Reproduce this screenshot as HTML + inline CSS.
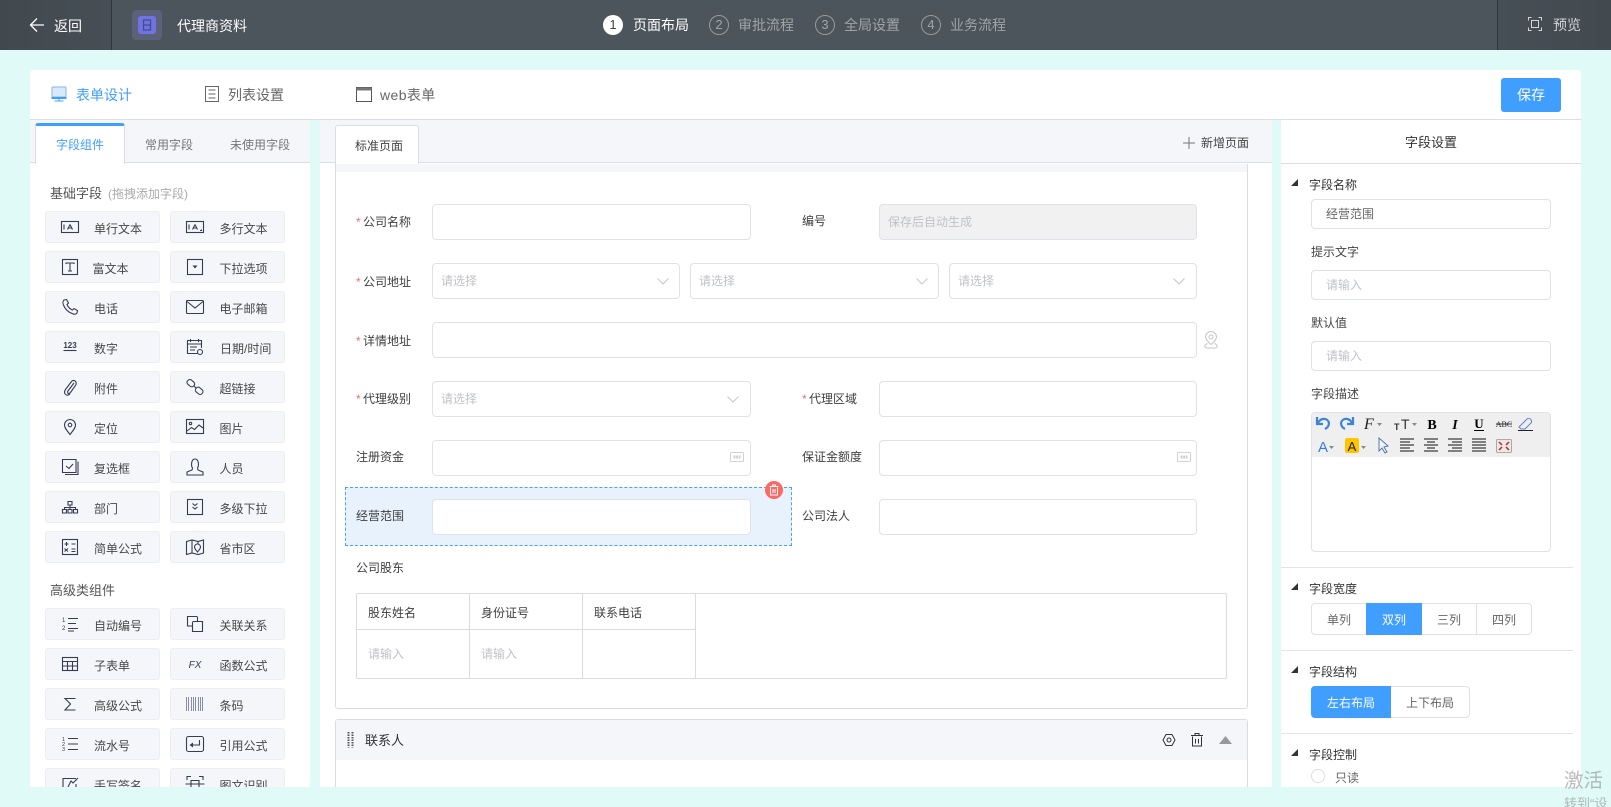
<!DOCTYPE html>
<html lang="zh"><head><meta charset="utf-8"><title>代理商资料</title>
<style>
html,body{margin:0;padding:0;width:1611px;height:807px;overflow:hidden;background:#e0fbf7;font-family:"Liberation Sans","Noto Sans CJK SC",sans-serif;font-size:12px;color:#555}
div,span,svg{position:absolute;box-sizing:border-box}
.t{white-space:nowrap;line-height:20px;height:20px}
.i{border:1px solid #e0e2ea;border-radius:4px;background:#fff;height:36px}
.ph{color:#c0c2c8}
.b{width:115px;height:32px;background:#f4f6fa;border:1px solid #ebeef4;border-radius:3px}
.b .t{left:48px;top:7px;color:#484848}
.b svg{left:14px;top:5px}
.st{fill:none;stroke:#363c52;stroke-width:1.1}
.s14{font-size:14px}
.lb{color:#3f3f3f}
.star{position:static;display:inline-block;width:7px;color:#f56c6c}
.ln{background:#e2e4ea;height:1px}
</style></head><body>
<!-- header -->
<div style="left:0;top:0;width:1611px;height:50px;background:#4d555c"></div>
<div style="left:0;top:0;width:112px;height:50px;background:linear-gradient(90deg,#41494f,#474f56);border-right:1px solid #2f353a"></div>
<div style="left:1497px;top:0;width:114px;height:50px;background:linear-gradient(90deg,#474f56,#42494f);border-left:1px solid #2f353a"></div>
<svg style="left:29px;top:17px" width="16" height="16" viewBox="0 0 16 16"><path d="M15 8H1.500M8 1.500L1.500 8L8 14.500" fill="none" stroke="#fff" stroke-width="1.300"/></svg>
<div class="t s14" style="left:54px;top:16px;color:#fff">返回</div>
<div style="left:132px;top:10px;width:30px;height:30px;border-radius:4px;background:#5b6179"></div>
<div style="left:138px;top:16px;width:18px;height:18px;border-radius:3px;background:#6f74e2"></div>
<svg style="left:142px;top:18px" width="10" height="14" viewBox="0 0 10 14"><path d="M1.500 2h7v10h-7zM1.500 7h7" fill="none" stroke="#474a8c" stroke-width="1.300"/></svg>
<div class="t" style="left:177px;top:16px;font-size:14px;color:#fff">代理商资料</div>

<div style="left:603px;top:15px;width:20px;height:20px;border-radius:50%;background:#fff;color:#444;text-align:center;line-height:20px;font-size:13px">1</div>
<div class="t s14" style="left:633px;top:15px;color:#fff">页面布局</div>
<div style="left:709px;top:15px;width:20px;height:20px;border-radius:50%;border:1px solid #999;color:#a0a4a7;text-align:center;line-height:18px;font-size:13px">2</div>
<div class="t s14" style="left:738px;top:15px;color:#a0a4a7">审批流程</div>
<div style="left:815px;top:15px;width:20px;height:20px;border-radius:50%;border:1px solid #999;color:#a0a4a7;text-align:center;line-height:18px;font-size:13px">3</div>
<div class="t s14" style="left:844px;top:15px;color:#a0a4a7">全局设置</div>
<div style="left:921px;top:15px;width:20px;height:20px;border-radius:50%;border:1px solid #999;color:#a0a4a7;text-align:center;line-height:18px;font-size:13px">4</div>
<div class="t s14" style="left:950px;top:15px;color:#a0a4a7">业务流程</div>
<svg style="left:1527px;top:16px" width="16" height="16" viewBox="0 0 16 16"><path d="M4.500 1.500H1.500V4.500M11.500 1.500H14.500V4.500M4.500 14.500H1.500V11.500M11.500 14.500H14.500V11.500M4.500 4.500H11.500V11.500H4.500Z" fill="none" stroke="#d2d4d6" stroke-width="1"/></svg>
<div class="t s14" style="left:1553px;top:15px;color:#d2d4d6">预览</div>

<!-- card -->
<div style="left:30px;top:70px;width:1551px;height:717px;background:#fff;border-radius:4px 4px 0 0"></div>
<div style="left:30px;top:119px;width:1551px;height:1px;background:#dcdde2"></div>
<svg style="left:51px;top:86px" width="16" height="16" viewBox="0 0 16 16"><rect x="1" y="1" width="14" height="10" rx="1" fill="#dbe9fd" stroke="#7fb5fb"/><path d="M1 11.500h14v1H1zM8 12v3M3.500 15h9" stroke="#409eff" fill="#409eff"/></svg>
<div class="t s14" style="left:76px;top:85px;color:#409eff">表单设计</div>
<svg style="left:204px;top:86px" width="16" height="16" viewBox="0 0 16 16"><path d="M1.500 .5h13v15h-13zM4.500 4h7M4.500 8h7M4.500 12h7" fill="none" stroke="#666"/></svg>
<div class="t s14" style="left:228px;top:85px;color:#666">列表设置</div>
<svg style="left:356px;top:87px" width="16" height="15" viewBox="0 0 16 15"><rect x=".5" y=".5" width="15" height="14" fill="none" stroke="#555"/><rect x=".5" y=".5" width="15" height="3" fill="#777"/></svg>
<div class="t s14" style="left:380px;top:85px;color:#666;letter-spacing:.4px">web表单</div>
<div style="left:1501px;top:78px;width:60px;height:34px;background:#409eff;border-radius:3px;color:#fff;text-align:center;line-height:34px;font-size:14px">保存</div>

<!-- gaps -->
<div style="left:310px;top:120px;width:10px;height:667px;background:#e0fbf7"></div>
<div style="left:1272px;top:120px;width:9px;height:667px;background:#e0fbf7"></div>

<!-- left panel -->
<div style="left:30px;top:120px;width:280px;height:43px;background:#f4f6fa;border-bottom:1px solid #dcdde2"></div>
<div style="left:35px;top:123px;width:90px;height:41px;background:#fff;border:1px solid #dcdde2;border-top:3px solid #409eff;border-bottom:0;border-radius:3px 3px 0 0"></div>
<div class="t" style="left:56px;top:135px;color:#409eff">字段组件</div>
<div class="t" style="left:145px;top:135px;color:#777">常用字段</div>
<div class="t" style="left:230px;top:135px;color:#777">未使用字段</div>
<div class="t" style="left:50px;top:184px;font-size:13px;color:#555">基础字段<span style="position:static;font-size:12px;color:#aaa;margin-left:6px">(拖拽添加字段)</span></div>

<div style="left:30px;top:200px;width:280px;height:587px;overflow:hidden">
<div class="b" style="left:15px;top:11px"><svg width="20" height="20" viewBox="0 0 20 20"><rect class="st" x="1.500" y="4.500" width="17" height="11"/><path class="st" d="M4 7.500v5M10 7.500l-2.500 5M10 7.500l2.500 5M8.500 11h3"/></svg><div class="t">单行文本</div></div>
<div class="b" style="left:140px;top:11px"><svg width="20" height="20" viewBox="0 0 20 20"><rect class="st" x="1.500" y="4.500" width="17" height="11"/><path class="st" d="M4 7.500v5M10 7.500l-2.500 5M10 7.500l2.500 5M8.500 11h3M15 13.500h1.500v-1"/></svg><div class="t" style="left:48.500px">多行文本</div></div>
<div class="b" style="left:15px;top:51px"><svg width="20" height="20" viewBox="0 0 20 20"><rect class="st" x="2.500" y="2.500" width="15" height="15"/><path class="st" d="M6 7V6h8v1M10 6v8M8 14h4"/></svg><div class="t" style="left:46.500px">富文本</div></div>
<div class="b" style="left:140px;top:51px"><svg width="20" height="20" viewBox="0 0 20 20"><rect class="st" x="2.500" y="2.500" width="15" height="15"/><path d="M7.500 8.500h5L10 11.500z" fill="#363c52"/></svg><div class="t" style="left:48.500px">下拉选项</div></div>
<div class="b" style="left:15px;top:91px"><svg width="20" height="20" viewBox="0 0 20 20"><path class="st" d="M4 3L6.500 2.500L8.500 6L7 7.500C8 10 10 12 12.500 13L14 11.500L17.500 13.500L17 16C16 17.500 14 17.500 12 16.500C8 15 5 12 3.500 8C2.500 6 3 4 4 3Z"/></svg><div class="t">电话</div></div>
<div class="b" style="left:140px;top:91px"><svg width="20" height="20" viewBox="0 0 20 20"><rect class="st" x="1.500" y="3.500" width="17" height="13" rx="1"/><path class="st" d="M2 4.500L10 11L18 4.500"/></svg><div class="t" style="left:48.500px">电子邮箱</div></div>
<div class="b" style="left:15px;top:131px"><svg width="20" height="20" viewBox="0 0 20 20"><text x="10" y="11" font-size="8" font-weight="bold" text-anchor="middle" fill="#363c52" font-family="Liberation Sans">123</text><path class="st" d="M3.500 13.500h13"/></svg><div class="t">数字</div></div>
<div class="b" style="left:140px;top:131px"><svg width="20" height="20" viewBox="0 0 20 20"><path class="st" d="M12.500 16.500H2.500V3.500H16.500V11M5.500 2V5M13.500 2V5M2.500 7H16.500M5 10H12M5 13H10"/><circle class="st" cx="15" cy="15" r="2.500"/></svg><div class="t" style="left:49px">日期/时间</div></div>
<div class="b" style="left:15px;top:171px"><svg width="20" height="20" viewBox="0 0 20 20"><path class="st" d="M14 6L8 14C6.500 16 9 17.500 10.500 15.500L15.500 8.500C17.500 5.500 14.500 1.500 11.500 4.500L5.500 12.500C3 16 6 20 10 17"/></svg><div class="t">附件</div></div>
<div class="b" style="left:140px;top:171px"><svg width="20" height="20" viewBox="0 0 20 20"><rect class="st" x="2" y="3.500" width="8" height="5.500" rx="2.500" transform="rotate(40 6 6)"/><rect class="st" x="10" y="11" width="8" height="5.500" rx="2.500" transform="rotate(40 14 14)"/><path class="st" d="M8.500 8.500L11.500 11.500"/></svg><div class="t" style="left:48.500px">超链接</div></div>
<div class="b" style="left:15px;top:211px"><svg width="20" height="20" viewBox="0 0 20 20"><path class="st" d="M10 17.500C7 13.500 4.500 11 4.500 8A5.500 5.500 0 0 1 15.500 8C15.500 11 13 13.500 10 17.500Z"/><circle class="st" cx="10" cy="8" r="1.800"/></svg><div class="t">定位</div></div>
<div class="b" style="left:140px;top:211px"><svg width="20" height="20" viewBox="0 0 20 20"><rect class="st" x="1.500" y="2.500" width="17" height="14"/><circle class="st" cx="5.500" cy="6.500" r="1.200"/><path class="st" d="M2 14L6.500 10.500L9.500 12.500L14 8L18 11"/></svg><div class="t" style="left:48.500px">图片</div></div>
<div class="b" style="left:15px;top:251px"><svg width="20" height="20" viewBox="0 0 20 20"><path class="st" d="M16 2.500H2.500V15.500H16ZM18 4.500V17.500H5"/><path class="st" d="M6 9L9 11.500L13 7"/></svg><div class="t">复选框</div></div>
<div class="b" style="left:140px;top:251px"><svg width="20" height="20" viewBox="0 0 20 20"><path class="st" d="M7.500 11C6 9 6 2 10 2C14 2 14 9 12.500 11L13 13L18 15V18H2V15L7 13Z"/></svg><div class="t" style="left:48.500px">人员</div></div>
<div class="b" style="left:15px;top:291px"><svg width="20" height="20" viewBox="0 0 20 20"><path class="st" d="M8 4.500h4v3.500H8zM2.500 12.500h4V16h-4zM8 12.500h4V16H8zM13.500 12.500h4V16h-4zM10 8v4.500M4.500 12.500V10.500h11v2"/></svg><div class="t">部门</div></div>
<div class="b" style="left:140px;top:291px"><svg width="20" height="20" viewBox="0 0 20 20"><rect class="st" x="2.500" y="2.500" width="15" height="15"/><path class="st" d="M7.500 6.500L10 8.500L12.500 6.500M7.500 10L10 12L12.500 10"/></svg><div class="t" style="left:48.500px">多级下拉</div></div>
<div class="b" style="left:15px;top:331px"><svg width="20" height="20" viewBox="0 0 20 20"><rect class="st" x="2.500" y="2.500" width="15" height="15"/><path class="st" d="M4.500 7h4M6.500 5v4M11.500 7h4M4.500 11.500l3.500 3M8 11.500l-3.500 3M11.500 12h4M11.500 14.500h4"/></svg><div class="t">简单公式</div></div>
<div class="b" style="left:140px;top:331px"><svg width="20" height="20" viewBox="0 0 20 20"><path class="st" d="M1.500 4.500L7 3L13 4.500L18.500 3V16L13 17.500L7 16L1.500 17.500ZM7 3V16M13 4.500V7"/><path class="st" d="M12.500 15C10.500 12.500 9.500 11.500 9.500 10A3 3 0 0 1 15.500 10C15.500 11.500 14.500 12.500 12.500 15Z"/></svg><div class="t" style="left:48.500px">省市区</div></div>

<div class="t" style="left:20px;top:381px;font-size:13px;color:#555">高级类组件</div>

<div class="b" style="left:15px;top:408px"><svg width="20" height="20" viewBox="0 0 20 20"><path class="st" d="M8 4.500h10M8 9.500h8M8 14.500h10M8 17h6"/><text x="2" y="8" font-size="6" fill="#363c52" font-family="Liberation Sans">1</text><text x="2" y="16" font-size="6" fill="#363c52" font-family="Liberation Sans">2</text></svg><div class="t">自动编号</div></div>
<div class="b" style="left:140px;top:408px"><svg width="20" height="20" viewBox="0 0 20 20"><path class="st" d="M12 2.500H2.500V12H7M8 7.500H17.500V17.500H7.500V7.500M12.500 2.500V7.500"/></svg><div class="t" style="left:48.500px">关联关系</div></div>
<div class="b" style="left:15px;top:448px"><svg width="20" height="20" viewBox="0 0 20 20"><rect class="st" x="2.500" y="3.500" width="15" height="13"/><path class="st" d="M2.500 7.500h15M2.500 12h15M7.500 7.500v9M12.500 7.500v9"/></svg><div class="t">子表单</div></div>
<div class="b" style="left:140px;top:448px"><svg width="20" height="20" viewBox="0 0 20 20"><text x="10" y="14" font-size="10" font-style="italic" text-anchor="middle" fill="#363c52" font-family="Liberation Sans">FX</text></svg><div class="t" style="left:48.500px">函数公式</div></div>
<div class="b" style="left:15px;top:488px"><svg width="20" height="20" viewBox="0 0 20 20"><path class="st" stroke-width="1.200" d="M15.500 4.500H5L10.500 10L5 16H15.500"/></svg><div class="t">高级公式</div></div>
<div class="b" style="left:140px;top:488px"><svg width="20" height="20" viewBox="0 0 20 20"><path stroke="#8a8ca8" stroke-width="1" d="M1.500 3v14M3.500 3v14M6.500 3v14M8.500 3v14M10.500 3v14M13.500 3v14M15.500 3v14M17.500 3v14"/></svg><div class="t" style="left:48.500px">条码</div></div>
<div class="b" style="left:15px;top:528px"><svg width="20" height="20" viewBox="0 0 20 20"><path class="st" d="M8 4.500h10M8 10h10M8 15.500h10"/><text x="2" y="7" font-size="5.500" fill="#363c52" font-family="Liberation Sans">1</text><text x="2" y="12" font-size="5.500" fill="#363c52" font-family="Liberation Sans">2</text><text x="2" y="17" font-size="5.500" fill="#363c52" font-family="Liberation Sans">3</text></svg><div class="t">流水号</div></div>
<div class="b" style="left:140px;top:528px"><svg width="20" height="20" viewBox="0 0 20 20"><rect class="st" x="1.500" y="2.500" width="17" height="15" rx="2"/><path class="st" d="M14.500 6v5H6.500"/><path d="M8 8.500V13.500L4.500 11z" fill="#363c52"/></svg><div class="t" style="left:48.500px">引用公式</div></div>
<div class="b" style="left:15px;top:568px"><svg width="20" height="20" viewBox="0 0 20 20"><path class="st" d="M16 4.500H3V17H16V10M8 13L11 7L13 9L18 4"/></svg><div class="t">手写签名</div></div>
<div class="b" style="left:140px;top:568px"><svg width="20" height="20" viewBox="0 0 20 20"><path class="st" d="M2 6V2.500H6M14 2.500H18V6M2 14V17.500H6M14 17.500H18V14M.5 10h19M6 6.500H14V14H6z"/></svg><div class="t" style="left:48.500px">图文识别</div></div>
</div>

<!-- center -->
<div style="left:320px;top:120px;width:952px;height:43px;background:#f4f6fa;border-bottom:1px solid #dcdde2"></div>
<div style="left:335px;top:164px;width:913px;height:545px;border:1px solid #dcdcdf;border-top:0;border-radius:0 0 3px 3px"></div>
<div style="left:336px;top:164px;width:911px;height:8px;background:#f4f6fa"></div>
<div style="left:335px;top:125px;width:84px;height:39px;background:#fff;border:1px solid #dcdde2;border-bottom:0;border-radius:3px 3px 0 0"></div>
<div class="t" style="left:355px;top:136px;color:#444">标准页面</div>
<svg style="left:1183px;top:137px" width="12" height="12" viewBox="0 0 12 12"><path d="M6 0V12M0 6H12" stroke="#777" fill="none"/></svg>
<div class="t" style="left:1201px;top:133px;color:#444">新增页面</div>

<div class="t lb" style="left:356px;top:212px"><span class="star">*</span>公司名称</div>
<div class="i" style="left:432px;top:204px;width:319px"></div>
<div class="t lb" style="left:802px;top:211px">编号</div>
<div class="i" style="left:879px;top:204px;width:318px;background:#f1f1f1"></div>
<div class="t ph" style="left:888px;top:212px">保存后自动生成</div>

<div class="t lb" style="left:356px;top:272px"><span class="star">*</span>公司地址</div>
<div class="i" style="left:432px;top:263px;width:248px"></div>
<div class="t ph" style="left:441px;top:271px">请选择</div>
<svg style="left:657px;top:278px" width="12" height="7" viewBox="0 0 12 7"><path d="M.5 .5L6 6L11.500 .5" fill="none" stroke="#c4c6cc"/></svg>
<div class="i" style="left:690px;top:263px;width:249px"></div>
<div class="t ph" style="left:699px;top:271px">请选择</div>
<svg style="left:916px;top:278px" width="12" height="7" viewBox="0 0 12 7"><path d="M.5 .5L6 6L11.500 .5" fill="none" stroke="#c4c6cc"/></svg>
<div class="i" style="left:949px;top:263px;width:248px"></div>
<div class="t ph" style="left:958px;top:271px">请选择</div>
<svg style="left:1173px;top:278px" width="12" height="7" viewBox="0 0 12 7"><path d="M.5 .5L6 6L11.500 .5" fill="none" stroke="#c4c6cc"/></svg>

<div class="t lb" style="left:356px;top:331px"><span class="star">*</span>详情地址</div>
<div class="i" style="left:432px;top:322px;width:765px"></div>
<svg style="left:1203px;top:331px" width="16" height="18" viewBox="0 0 16 18"><path d="M8 13.500C5 10.500 2.500 8.500 2.500 6A5.500 5.500 0 0 1 13.500 6C13.500 8.500 11 10.500 8 13.500Z" fill="none" stroke="#c4c6cc"/><circle cx="8" cy="6" r="2" fill="none" stroke="#c4c6cc"/><path d="M4.500 12.500C1 14 1 17 4 17H12C15 17 15 14 11.500 12.500" fill="none" stroke="#c4c6cc"/></svg>

<div class="t lb" style="left:356px;top:389px"><span class="star">*</span>代理级别</div>
<div class="i" style="left:432px;top:381px;width:319px"></div>
<div class="t ph" style="left:441px;top:389px">请选择</div>
<svg style="left:727px;top:396px" width="12" height="7" viewBox="0 0 12 7"><path d="M.5 .5L6 6L11.500 .5" fill="none" stroke="#c4c6cc"/></svg>
<div class="t lb" style="left:802px;top:389px"><span class="star">*</span>代理区域</div>
<div class="i" style="left:879px;top:381px;width:318px"></div>

<div class="t lb" style="left:356px;top:447px">注册资金</div>
<div class="i" style="left:432px;top:440px;width:319px"></div>
<svg style="left:730px;top:452px" width="14" height="10" viewBox="0 0 14 10"><rect x=".5" y=".5" width="13" height="9" rx="1" fill="none" stroke="#d0d2d8"/><path d="M3.500 5h7" stroke="#d0d2d8" stroke-width="3" stroke-dasharray="2 .6"/></svg>
<div class="t lb" style="left:802px;top:447px">保证金额度</div>
<div class="i" style="left:879px;top:440px;width:318px"></div>
<svg style="left:1177px;top:452px" width="14" height="10" viewBox="0 0 14 10"><rect x=".5" y=".5" width="13" height="9" rx="1" fill="none" stroke="#d0d2d8"/><path d="M3.500 5h7" stroke="#d0d2d8" stroke-width="3" stroke-dasharray="2 .6"/></svg>

<div style="left:345px;top:487px;width:447px;height:59px;background:#e8f2fd;border:1px dashed #4aa6e0"></div>
<div class="t lb" style="left:356px;top:506px">经营范围</div>
<div class="i" style="left:432px;top:499px;width:319px"></div>
<div style="left:765px;top:481px;width:18px;height:18px;border-radius:50%;background:#f96a64"></div>
<svg style="left:768px;top:484px" width="12" height="12" viewBox="0 0 12 12"><path d="M2.500 3.500V11H9.500V3.500M1.500 2.500H10.500M4.500 2.500V1H7.500V2.500M5 5V9M7 5V9" fill="none" stroke="#fff"/></svg>
<div class="t lb" style="left:802px;top:506px">公司法人</div>
<div class="i" style="left:879px;top:499px;width:318px"></div>

<div class="t lb" style="left:356px;top:558px">公司股东</div>
<div style="left:356px;top:593px;width:871px;height:86px;border:1px solid #dcdcdc;border-radius:2px"></div>
<div style="left:469px;top:593px;width:1px;height:86px;background:#dcdcdc"></div>
<div style="left:582px;top:593px;width:1px;height:86px;background:#dcdcdc"></div>
<div style="left:695px;top:593px;width:1px;height:86px;background:#dcdcdc"></div>
<div style="left:357px;top:629px;width:338px;height:1px;background:#dcdcdc"></div>
<div class="t lb" style="left:368px;top:603px">股东姓名</div>
<div class="t lb" style="left:481px;top:603px">身份证号</div>
<div class="t lb" style="left:594px;top:603px">联系电话</div>
<div class="t ph" style="left:368px;top:644px">请输入</div>
<div class="t ph" style="left:481px;top:644px">请输入</div>

<div style="left:335px;top:719px;width:913px;height:68px;border:1px solid #dcdcdf;border-bottom:0;border-radius:3px 3px 0 0"></div>
<div style="left:336px;top:720px;width:911px;height:40px;background:#f4f6fa"></div>
<svg style="left:347px;top:732px" width="7" height="16" viewBox="0 0 7 16"><path d="M1.500 0V15.500M5.500 0V15.500" stroke="#555" stroke-width="2" stroke-dasharray="1.500 1" fill="none"/></svg>
<div class="t" style="left:365px;top:731px;font-size:13px;color:#333">联系人</div>
<svg style="left:1162px;top:733px" width="14" height="14" viewBox="0 0 14 14"><path d="M4 1.500H10L13 7L10 12.500H4L1 7Z" fill="none" stroke="#333" stroke-linejoin="round"/><circle cx="7" cy="7" r="2" fill="none" stroke="#333"/></svg>
<svg style="left:1191px;top:733px" width="12" height="14" viewBox="0 0 12 14"><path d="M1.500 3.500V13H10.500V3.500M0 2.500H12M4 2.500V.5H8V2.500M4.500 6V10.500M7.500 6V10.500" fill="none" stroke="#333"/></svg>
<svg style="left:1219px;top:736px" width="13" height="8" viewBox="0 0 13 8"><path d="M0 8L6.500 0L13 8Z" fill="#999"/></svg>

<!-- right panel -->
<div class="t" style="left:1405px;top:133px;font-size:13px;color:#333">字段设置</div>
<div style="left:1281px;top:163px;width:300px;height:1px;background:#dcdde2"></div>

<svg style="left:1291px;top:179px" width="7" height="7" viewBox="0 0 7 7"><path d="M7 0V7H0Z" fill="#333"/></svg>
<div class="t" style="left:1309px;top:175px;color:#333">字段名称</div>
<div class="i" style="left:1311px;top:199px;width:240px;height:30px"></div>
<div class="t" style="left:1326px;top:204px;color:#666">经营范围</div>
<div class="t" style="left:1311px;top:241.500px;color:#444">提示文字</div>
<div class="i" style="left:1311px;top:270px;width:240px;height:30px"></div>
<div class="t ph" style="left:1326px;top:275px">请输入</div>
<div class="t" style="left:1311px;top:312.500px;color:#444">默认值</div>
<div class="i" style="left:1311px;top:341px;width:240px;height:30px"></div>
<div class="t ph" style="left:1326px;top:346px">请输入</div>
<div class="t" style="left:1311px;top:383.500px;color:#444">字段描述</div>

<div style="left:1311px;top:412px;width:240px;height:140px;border:1px solid #dfe1e8;border-radius:4px;background:#fff;overflow:hidden"><div style="left:0;top:0;width:238px;height:44px;background:#efefef"></div></div>
<svg style="left:1311px;top:412px" width="240" height="46" viewBox="0 0 240 46" font-family="Liberation Serif">
<path d="M6 5V12H12M7 11C10 5 17 6 18 11C18 14 16 16 14 17" fill="none" stroke="#3f83d9" stroke-width="2.200"/>
<path d="M42 5V12H36M41 11C38 5 31 6 30 11C30 14 32 16 34 17" fill="none" stroke="#3f83d9" stroke-width="2.200"/>
<text x="53" y="17" font-size="16" font-style="italic" fill="#222">F</text><path d="M66 11h5l-2.500 3z" fill="#888"/>
<text x="83" y="18" font-size="9" font-family="Liberation Sans" font-weight="bold" fill="#333">T</text><text x="90" y="17" font-size="14" font-family="Liberation Sans" fill="#333">T</text><path d="M101 11h5l-2.500 3z" fill="#888"/>
<text x="121" y="17" font-size="14" font-weight="bold" text-anchor="middle" fill="#000">B</text>
<text x="144" y="17" font-size="14" font-weight="bold" font-style="italic" text-anchor="middle" fill="#000">I</text>
<text x="168" y="16" font-size="13" font-weight="bold" text-anchor="middle" fill="#000">U</text><path d="M163 18.500h10" stroke="#000"/>
<text x="193" y="15" font-size="8" text-anchor="middle" fill="#222">ABC</text><path d="M185 12h16" stroke="#334"/>
<path d="M208 15L216 7C218 5 222 8 220 11L214 17H210Z" fill="#e8eef8" stroke="#6a83b5"/><path d="M207 18.500H222" stroke="#222"/>
<text x="12" y="40" font-size="15" font-family="Liberation Sans" text-anchor="middle" fill="#3a7bea">A</text><path d="M18 34h5l-2.500 3z" fill="#888"/>
<rect x="34" y="26" width="14" height="15" rx="2" fill="#ffc400"/><text x="41" y="39" font-size="13" font-family="Liberation Sans" text-anchor="middle" fill="#222">A</text><path d="M50 34h5l-2.500 3z" fill="#888"/>
<path d="M68 26V39L71 36L74 41L76 40L73 35L77 34Z" fill="#eef3fb" stroke="#5878a8"/>
<path d="M89 29H103M89 32H99M89 35H103M89 38H99M89 41H103" stroke="#111" transform="translate(0,-2)"/>
<path d="M113 29H127M116 32H124M113 35H127M116 38H124M113 41H127" stroke="#111" transform="translate(0,-2)"/>
<path d="M137 29H151M141 32H151M137 35H151M141 38H151M137 41H151" stroke="#111" transform="translate(0,-2)"/>
<path d="M161 29H175M161 32H175M161 35H175M161 38H175M161 41H175" stroke="#111" transform="translate(0,-2)"/>
<rect x="185.500" y="27.500" width="15" height="13" rx="1" fill="#e8e8e8" stroke="#aaa"/><path d="M188 30l3 3M198 30l-3 3M188 38l3-3M198 38l-3-3" stroke="#c22" stroke-width="1.500"/>
</svg>

<div class="ln" style="left:1281px;top:567px;width:292px"></div>
<svg style="left:1291px;top:583px" width="7" height="7" viewBox="0 0 7 7"><path d="M7 0V7H0Z" fill="#333"/></svg>
<div class="t" style="left:1309px;top:579px;color:#333">字段宽度</div>
<div style="left:1311px;top:603px;width:221px;height:32px;border:1px solid #dfe1e8;border-radius:4px;background:#fff"></div>
<div style="left:1366px;top:603px;width:56px;height:32px;background:#409eff"></div>
<div style="left:1476px;top:603px;width:1px;height:32px;background:#dfe1e8"></div>
<div class="t" style="left:1327px;top:610px;color:#666">单列</div>
<div class="t" style="left:1382px;top:610px;color:#fff">双列</div>
<div class="t" style="left:1437px;top:610px;color:#666">三列</div>
<div class="t" style="left:1492px;top:610px;color:#666">四列</div>

<div class="ln" style="left:1281px;top:650px;width:292px"></div>
<svg style="left:1291px;top:666px" width="7" height="7" viewBox="0 0 7 7"><path d="M7 0V7H0Z" fill="#333"/></svg>
<div class="t" style="left:1309px;top:662px;color:#333">字段结构</div>
<div style="left:1311px;top:686px;width:159px;height:32px;border:1px solid #dfe1e8;border-radius:4px;background:#fff"></div>
<div style="left:1311px;top:686px;width:80px;height:32px;background:#409eff;border-radius:4px 0 0 4px"></div>
<div class="t" style="left:1327px;top:693px;color:#fff">左右布局</div>
<div class="t" style="left:1406px;top:693px;color:#666">上下布局</div>

<div class="ln" style="left:1281px;top:733px;width:292px"></div>
<svg style="left:1291px;top:749px" width="7" height="7" viewBox="0 0 7 7"><path d="M7 0V7H0Z" fill="#333"/></svg>
<div class="t" style="left:1309px;top:745px;color:#333">字段控制</div>
<div style="left:1311px;top:769px;width:14px;height:14px;border-radius:50%;border:1px solid #dcdfe6;background:#fff"></div>
<div class="t" style="left:1335px;top:768px;color:#666">只读</div>

<!-- mask bottom -->
<div style="left:0;top:787px;width:1611px;height:20px;background:#e0fbf7"></div>
<!-- watermark -->
<div style="left:1564px;top:765px;width:47px;height:42px;overflow:hidden">
<div class="t" style="left:0;top:4px;font-size:19.500px;line-height:24px;height:24px;color:rgba(120,120,120,.5)">激活</div>
<div class="t" style="left:0;top:29px;font-size:13px;color:rgba(120,120,120,.5)">转到“设</div>
</div>
</body></html>
